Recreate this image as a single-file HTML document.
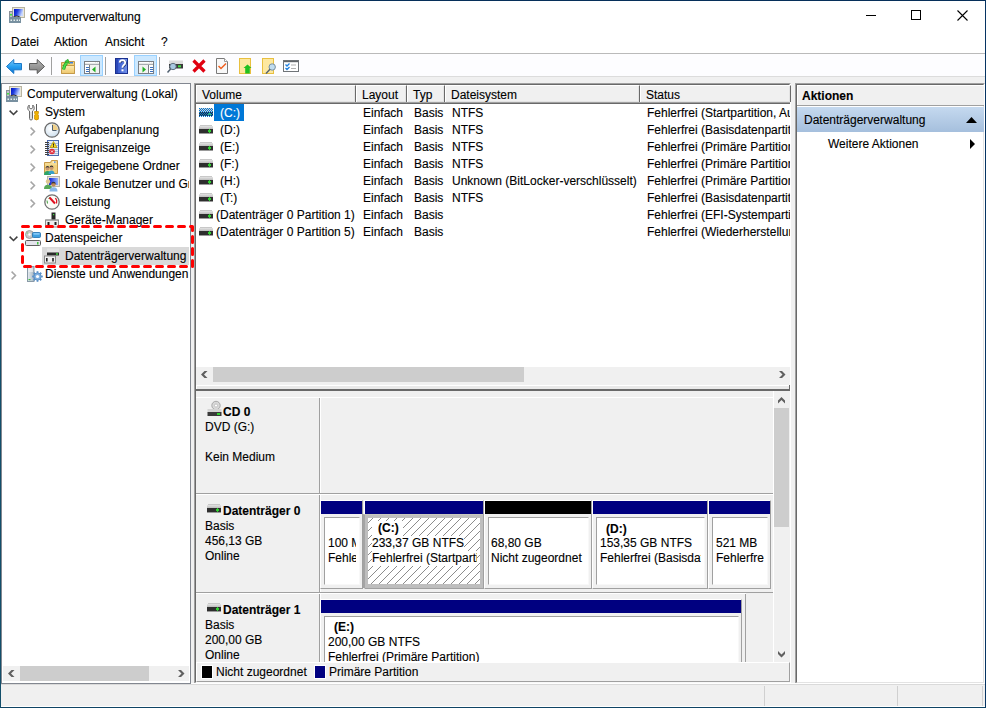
<!DOCTYPE html><html><head><meta charset="utf-8"><style>
*{margin:0;padding:0;box-sizing:border-box}
body{width:986px;height:708px;position:relative;overflow:hidden;background:#f0f0f0;font-family:"Liberation Sans",sans-serif;font-size:12px;color:#000}
.t{position:absolute;white-space:nowrap;line-height:14px;height:14px;-webkit-text-stroke:0.12px currentColor}
.b{position:absolute}
.bold{font-weight:bold}
svg{position:absolute;overflow:visible}
.clip{position:absolute;overflow:hidden}
</style></head><body>
<div class="b" style="left:0px;top:0px;width:986px;height:53px;background:#fff"></div>
<div class="b" style="left:0px;top:53px;width:986px;height:1px;background:#bababa"></div>
<div class="b" style="left:0px;top:54px;width:986px;height:22px;background:#fdfdff"></div>
<div class="b" style="left:0px;top:76px;width:986px;height:1px;background:#dcdcdc"></div>
<svg style="left:9px;top:7px" width="16" height="16" viewBox="0 0 16 16">
<defs><linearGradient id="scr9_7" x1="0" y1="0" x2="1" y2="0.3"><stop offset="0" stop-color="#0010c0"/><stop offset="0.45" stop-color="#2040e0"/><stop offset="1" stop-color="#c8d8ff"/></linearGradient></defs>
<rect x="3.5" y="0.5" width="12" height="10" fill="#e8e6da" stroke="#b8b4a0"/>
<rect x="5" y="2" width="9" height="7" fill="url(#scr9_7)"/>
<rect x="0.5" y="4.5" width="3" height="8" fill="#c0c4c8" stroke="#8a9098"/>
<rect x="1" y="7" width="2" height="1.5" fill="#40e040"/>
<path d="M4 10.5 Q8 7.5 11 10.5" fill="none" stroke="#202020" stroke-width="1.2"/>
<rect x="0" y="10" width="12" height="6" rx="0.5" fill="#7890a0"/>
<rect x="1.5" y="12.5" width="1.5" height="1.5" fill="#e8f0f0"/><rect x="4.5" y="12.5" width="1.5" height="1.5" fill="#e8f0f0"/><rect x="7.5" y="12.5" width="1.5" height="1.5" fill="#e8f0f0"/><rect x="10" y="12.5" width="1" height="1.5" fill="#e8f0f0"/>
</svg>
<div class="t " style="left:30px;top:10px;">Computerverwaltung</div>
<div class="t " style="left:11px;top:35px;">Datei</div>
<div class="t " style="left:54px;top:35px;">Aktion</div>
<div class="t " style="left:105px;top:35px;">Ansicht</div>
<div class="t " style="left:161px;top:35px;">?</div>
<div class="b" style="left:866px;top:15px;width:10px;height:1px;background:#000"></div>
<div class="b" style="left:911px;top:10px;width:10px;height:10px;border:1px solid #000"></div>
<svg style="left:957px;top:10px" width="11" height="11"><path d="M0.5 0.5 L10.5 10.5 M10.5 0.5 L0.5 10.5" stroke="#000" stroke-width="1.1"/></svg>
<svg style="left:6px;top:59px" width="17" height="16" viewBox="0 0 17 16"><defs><linearGradient id="ba" x1="0" y1="0" x2="0" y2="1"><stop offset="0" stop-color="#7cc8f8"/><stop offset="0.5" stop-color="#2aa0f0"/><stop offset="1" stop-color="#0a70d0"/></linearGradient></defs>
<path d="M0.5 7.5 L7.8 0.5 L7.8 4.5 L15.5 4.5 L15.5 10.8 L7.8 10.8 L7.8 14.5 Z" fill="url(#ba)" stroke="#1a78c8" stroke-width="1"/></svg>
<svg style="left:29px;top:59px" width="17" height="16" viewBox="0 0 17 16"><defs><linearGradient id="fa" x1="0" y1="0" x2="0" y2="1"><stop offset="0" stop-color="#b8b8b8"/><stop offset="1" stop-color="#7a7a7a"/></linearGradient></defs>
<path d="M15.5 7.5 L8.2 0.5 L8.2 4.5 L0.5 4.5 L0.5 10.8 L8.2 10.8 L8.2 14.5 Z" fill="url(#fa)" stroke="#5a5a5a" stroke-width="1"/></svg>
<div class="b" style="left:51px;top:57px;width:1px;height:18px;background:#a0a0a0"></div>
<svg style="left:61px;top:59px" width="15" height="15" viewBox="0 0 15 15"><defs><linearGradient id="fu" x1="0" y1="0" x2="0" y2="1"><stop offset="0" stop-color="#fdebb4"/><stop offset="1" stop-color="#eec76c"/></linearGradient></defs>
<path d="M0.5 3.5 L5 3.5 L6 2.5 L13.5 2.5 L13.5 14.5 L0.5 14.5 Z" fill="#f4d27c" stroke="#c49a4a"/>
<rect x="9" y="3" width="3" height="1.5" fill="#3a80e0"/>
<path d="M0.5 6.5 L13.5 6.5 L13.5 14.5 L0.5 14.5 Z" fill="url(#fu)" stroke="#c49a4a"/>
<path d="M2.6 10.5 Q3 6 6 3.8" fill="none" stroke="#22a022" stroke-width="3"/>
<path d="M2.6 10.5 Q3 6 6 3.8" fill="none" stroke="#4ade4a" stroke-width="1.6"/>
<path d="M3.8 2.5 L7 0.3 L8.5 4.5 Z" fill="#3ccc3c" stroke="#22a022" stroke-width="0.7"/></svg>
<div class="b" style="left:80px;top:55px;width:23px;height:21px;background:#cce8ff;border:1px solid #99d1ff"></div>
<svg style="left:84px;top:61px" width="16" height="13" viewBox="0 0 16 13"><g shape-rendering="crispEdges"><rect x="0" y="0" width="16" height="13" fill="#7a7e84"/>
<rect x="1" y="1" width="14" height="2" fill="#e8e8e8"/><rect x="1" y="1" width="10" height="1" fill="#fff"/>
<rect x="12" y="1" width="1" height="1" fill="#fff"/><rect x="14" y="1" width="1" height="1" fill="#fff"/>
<rect x="1" y="3" width="14" height="1" fill="#a8acb0"/>
<rect x="1" y="4" width="4" height="8" fill="#fff"/><rect x="2" y="6" width="3" height="1" fill="#3a70c0"/><rect x="2" y="8" width="3" height="1" fill="#3a70c0"/><rect x="2" y="10" width="3" height="1" fill="#3a70c0"/><rect x="5" y="4" width="1" height="8" fill="#7a7e84"/><rect x="6" y="4" width="9" height="8" fill="#f2f2f2"/><path d="M8 8.5 L11.5 5.5 L11.5 11.5 Z" fill="#22b022" shape-rendering="auto"/></g></svg>
<div class="b" style="left:105px;top:57px;width:1px;height:18px;background:#a0a0a0"></div>
<svg style="left:115px;top:58px" width="13" height="16" viewBox="0 0 13 16"><defs><linearGradient id="hb" x1="0" y1="0" x2="1" y2="0"><stop offset="0" stop-color="#3a5cd0"/><stop offset="1" stop-color="#7090e8"/></linearGradient></defs>
<g shape-rendering="crispEdges"><rect x="0" y="0" width="13" height="16" fill="#1a3090"/><rect x="1" y="1" width="2" height="14" fill="#2c48b8"/><rect x="3" y="1" width="9" height="14" fill="url(#hb)"/></g>
<path d="M4.6 4.6 Q5 2.2 7.4 2.2 Q10.2 2.3 10.2 4.8 Q10.2 6.4 8.4 7.4 Q7.5 8 7.5 9.8" fill="none" stroke="#203070" stroke-width="1.9" transform="translate(0.6,0.5)"/>
<path d="M4.6 4.6 Q5 2.2 7.4 2.2 Q10.2 2.3 10.2 4.8 Q10.2 6.4 8.4 7.4 Q7.5 8 7.5 9.8" fill="none" stroke="#fff" stroke-width="1.8"/>
<rect x="6.5" y="11.3" width="2" height="2" fill="#fff"/></svg>
<div class="b" style="left:134px;top:55px;width:23px;height:21px;background:#cce8ff;border:1px solid #99d1ff"></div>
<svg style="left:138px;top:61px" width="16" height="13" viewBox="0 0 16 13"><g shape-rendering="crispEdges"><rect x="0" y="0" width="16" height="13" fill="#7a7e84"/>
<rect x="1" y="1" width="14" height="2" fill="#e8e8e8"/><rect x="1" y="1" width="10" height="1" fill="#fff"/>
<rect x="12" y="1" width="1" height="1" fill="#fff"/><rect x="14" y="1" width="1" height="1" fill="#fff"/>
<rect x="1" y="3" width="14" height="1" fill="#a8acb0"/>
<rect x="11" y="4" width="4" height="8" fill="#fff"/><rect x="12" y="6" width="3" height="1" fill="#3a70c0"/><rect x="12" y="8" width="3" height="1" fill="#3a70c0"/><rect x="12" y="10" width="3" height="1" fill="#3a70c0"/><rect x="10" y="4" width="1" height="8" fill="#7a7e84"/><rect x="1" y="4" width="9" height="8" fill="#f2f2f2"/><path d="M4.5 5.5 L8 8.5 L4.5 11.5 Z" fill="#22b022" shape-rendering="auto"/></g></svg>
<div class="b" style="left:159px;top:57px;width:1px;height:18px;background:#a0a0a0"></div>
<svg style="left:167px;top:60px" width="17" height="14" viewBox="0 0 17 14"><rect x="2" y="0.5" width="14" height="4" fill="#dcdcdc"/><rect x="2" y="4" width="14" height="4.5" fill="#3a3a3a"/><rect x="11" y="5.3" width="3" height="2" fill="#40e040"/>
<circle cx="6" cy="6.5" r="3.2" fill="#a8c8e0" stroke="#607080" stroke-width="1"/>
<path d="M3.8 8.8 L0.5 12.5" stroke="#506070" stroke-width="1.5"/></svg>
<svg style="left:192px;top:59px" width="14" height="14" viewBox="0 0 14 14"><path d="M1.5 1.5 L12.5 12.5 M12.5 1.5 L1.5 12.5" stroke="#e00010" stroke-width="3.2"/></svg>
<svg style="left:216px;top:58px" width="12" height="16" viewBox="0 0 12 16"><path d="M0.5 0.5 L8.5 0.5 L11.5 3.5 L11.5 15.5 L0.5 15.5 Z" fill="#f8f8f8" stroke="#7a7a7a"/>
<path d="M8.5 0.5 L8.5 3.5 L11.5 3.5" fill="#fff" stroke="#9a9a9a"/>
<path d="M2.5 8 L5 10.5 L10 5.5" fill="none" stroke="#f06020" stroke-width="1.5"/></svg>
<svg style="left:239px;top:58px" width="14" height="16" viewBox="0 0 14 16"><rect x="0.5" y="0.5" width="11" height="15" fill="#fde8a0" stroke="#e8c040"/>
<path d="M6.5 6.5 L10.5 10 L8.8 10 L8.8 15.5 L4.2 15.5 L4.2 10 L2.5 10 Z" fill="#20c020" transform="translate(2,0)"/></svg>
<svg style="left:262px;top:58px" width="14" height="16" viewBox="0 0 14 16"><rect x="0.5" y="0.5" width="11" height="15" fill="#fde8a0" stroke="#e8c040"/>
<circle cx="10.2" cy="9" r="3.2" fill="#c0dcf0" stroke="#7890a0" stroke-width="1"/>
<path d="M8 11.3 L4 15.5" stroke="#506070" stroke-width="1.4"/></svg>
<svg style="left:283px;top:60px" width="16" height="12" viewBox="0 0 16 12"><rect x="0.5" y="0.5" width="15" height="11" fill="#fff" stroke="#707478"/>
<rect x="1" y="1" width="14" height="1.2" fill="#606468"/>
<path d="M2.5 4.5 L4 6 L6.5 3.5 M2.5 8 L4 9.5 L6.5 7" fill="none" stroke="#2080e0" stroke-width="1.3"/>
<rect x="8" y="4.5" width="5" height="1" fill="#b0b0b0"/><rect x="8" y="8" width="5" height="1" fill="#b0b0b0"/></svg>
<div class="b" style="left:1px;top:83px;width:190px;height:601px;background:#fff;border:1px solid #828790"></div>
<div class="b" style="left:42px;top:247px;width:147px;height:18px;background:#d9d9d9"></div>
<div class="clip" style="left:2px;top:84px;width:187px;height:580px">
<div class="t" style="left:25px;top:3px">Computerverwaltung (Lokal)</div>
<div class="t" style="left:43px;top:21px">System</div>
<div class="t" style="left:63px;top:39px">Aufgabenplanung</div>
<div class="t" style="left:63px;top:57px">Ereignisanzeige</div>
<div class="t" style="left:63px;top:75px">Freigegebene Ordner</div>
<div class="t" style="left:63px;top:93px">Lokale Benutzer und Gruppen</div>
<div class="t" style="left:63px;top:111px">Leistung</div>
<div class="t" style="left:63px;top:129px">Geräte-Manager</div>
<div class="t" style="left:43px;top:147px">Datenspeicher</div>
<div class="t" style="left:63px;top:165px">Datenträgerverwaltung</div>
<div class="t" style="left:43px;top:183px">Dienste und Anwendungen</div>
</div>
<svg style="left:9px;top:110px" width="10" height="6"><path d="M0.6 0.6 L4.5 4.5 L8.4 0.6" fill="none" stroke="#404040" stroke-width="1.5"/></svg>
<svg style="left:9px;top:236px" width="10" height="6"><path d="M0.6 0.6 L4.5 4.5 L8.4 0.6" fill="none" stroke="#404040" stroke-width="1.5"/></svg>
<svg style="left:30px;top:127px" width="6" height="10"><path d="M0.6 0.6 L4.5 4.5 L0.6 8.4" fill="none" stroke="#a6a6a6" stroke-width="1.5"/></svg>
<svg style="left:30px;top:145px" width="6" height="10"><path d="M0.6 0.6 L4.5 4.5 L0.6 8.4" fill="none" stroke="#a6a6a6" stroke-width="1.5"/></svg>
<svg style="left:30px;top:163px" width="6" height="10"><path d="M0.6 0.6 L4.5 4.5 L0.6 8.4" fill="none" stroke="#a6a6a6" stroke-width="1.5"/></svg>
<svg style="left:30px;top:181px" width="6" height="10"><path d="M0.6 0.6 L4.5 4.5 L0.6 8.4" fill="none" stroke="#a6a6a6" stroke-width="1.5"/></svg>
<svg style="left:30px;top:199px" width="6" height="10"><path d="M0.6 0.6 L4.5 4.5 L0.6 8.4" fill="none" stroke="#a6a6a6" stroke-width="1.5"/></svg>
<svg style="left:11px;top:271px" width="6" height="10"><path d="M0.6 0.6 L4.5 4.5 L0.6 8.4" fill="none" stroke="#a6a6a6" stroke-width="1.5"/></svg>
<svg style="left:6px;top:86px" width="16" height="16" viewBox="0 0 16 16">
<defs><linearGradient id="scr6_86" x1="0" y1="0" x2="1" y2="0.3"><stop offset="0" stop-color="#0010c0"/><stop offset="0.45" stop-color="#2040e0"/><stop offset="1" stop-color="#c8d8ff"/></linearGradient></defs>
<rect x="3.5" y="0.5" width="12" height="10" fill="#e8e6da" stroke="#b8b4a0"/>
<rect x="5" y="2" width="9" height="7" fill="url(#scr6_86)"/>
<rect x="0.5" y="4.5" width="3" height="8" fill="#c0c4c8" stroke="#8a9098"/>
<rect x="1" y="7" width="2" height="1.5" fill="#40e040"/>
<path d="M4 10.5 Q8 7.5 11 10.5" fill="none" stroke="#202020" stroke-width="1.2"/>
<rect x="0" y="10" width="12" height="6" rx="0.5" fill="#7890a0"/>
<rect x="1.5" y="12.5" width="1.5" height="1.5" fill="#e8f0f0"/><rect x="4.5" y="12.5" width="1.5" height="1.5" fill="#e8f0f0"/><rect x="7.5" y="12.5" width="1.5" height="1.5" fill="#e8f0f0"/><rect x="10" y="12.5" width="1" height="1.5" fill="#e8f0f0"/>
</svg>
<svg style="left:27px;top:104px" width="12" height="16" viewBox="0 0 12 16"><path d="M2.2 1 Q0.3 2.5 0.8 5 Q1.3 6.5 2.5 7 L2.5 14.5 Q2.5 16 4 16 Q5.5 16 5.5 14.5 L5.5 7 Q6.8 6.4 7.2 5 Q7.6 2.5 5.8 1 L5.8 3.8 L4 5 L2.2 3.8 Z" fill="#f4f4f4" stroke="#6a6a6a" stroke-width="1"/>
<rect x="3.5" y="8" width="1" height="7" fill="#c8c8c8"/>
<rect x="9" y="0" width="1" height="7.5" fill="#5a5a5a"/>
<path d="M7.6 7.5 L11.4 7.5 L11.4 9.3 L10.6 10.2 L11.4 11 L11.4 15.2 Q9.5 16.6 7.6 15.2 L7.6 11 L8.4 10.2 L7.6 9.3 Z" fill="#f2b400" stroke="#c88a00" stroke-width="0.8"/></svg>
<svg style="left:44px;top:122px" width="16" height="16" viewBox="0 0 16 16"><defs><radialGradient id="cl" cx="0.4" cy="0.4" r="0.7"><stop offset="0" stop-color="#ffffff"/><stop offset="1" stop-color="#c8dcec"/></radialGradient></defs>
<circle cx="8" cy="8" r="7.2" fill="url(#cl)" stroke="#6a6a6a" stroke-width="1.3"/>
<path d="M8 8 L8 2 A6 6 0 0 1 14 8 Z" fill="#f0d088"/>
<path d="M8.5 3 L8.5 8.5 L12.5 8.5" fill="none" stroke="#506070" stroke-width="1"/></svg>
<svg style="left:45px;top:140px" width="15" height="16" viewBox="0 0 15 16"><rect x="2.5" y="0.5" width="11" height="15" fill="#e4ecf8" stroke="#4a6ab0"/>
<g shape-rendering="crispEdges"><rect x="3" y="3" width="10" height="1" fill="#a8bcdc"/><rect x="3" y="5" width="10" height="1" fill="#a8bcdc"/><rect x="3" y="7" width="10" height="1" fill="#a8bcdc"/><rect x="3" y="9" width="10" height="1" fill="#a8bcdc"/><rect x="3" y="11" width="10" height="1" fill="#a8bcdc"/><rect x="3" y="13" width="10" height="1" fill="#a8bcdc"/></g>
<path d="M0 2.5 H4 M0 4.5 H4 M0 6.5 H4 M0 8.5 H4 M0 10.5 H4 M0 12.5 H4 M0 14.5 H4" stroke="#404040" stroke-width="1"/>
<path d="M8.5 1.5 L12 7.5 L5 7.5 Z" fill="#f8d820" stroke="#b09000" stroke-width="0.7"/><rect x="8" y="3.5" width="1" height="2.2" fill="#202020"/><rect x="8" y="6.2" width="1" height="0.8" fill="#202020"/>
<circle cx="7" cy="11.5" r="2.8" fill="#e02838"/><path d="M6 10.5 L8 12.5 M8 10.5 L6 12.5" stroke="#fff" stroke-width="0.9"/></svg>
<svg style="left:44px;top:160px" width="14" height="16" viewBox="0 0 14 16"><path d="M0.5 2.5 L6.5 2.5 L7.5 0.5 L13.5 0.5 L13.5 13.5 L0.5 13.5 Z" fill="#f2d27e" stroke="#c89a48"/>
<rect x="8.5" y="1.5" width="3" height="1.2" fill="#fff"/><rect x="10" y="1.5" width="1.5" height="1.2" fill="#3a80e0"/>
<rect x="1" y="3.5" width="12" height="1" fill="#f8e4a8"/>
<circle cx="3.5" cy="8.5" r="2" fill="#c89870"/><path d="M1.5 8 Q1.8 6 3.5 6 Q5.3 6 5.5 8 Q4.5 7 3.5 7.2 Q2.5 7 1.5 8Z" fill="#303030"/>
<path d="M0 15 Q0 11 3.5 11 Q7 11 7 15 Z" fill="#2ea468"/>
<circle cx="7.5" cy="8" r="2" fill="#c89870"/><path d="M5.5 7.5 Q5.8 5.5 7.5 5.5 Q9.3 5.5 9.5 7.5 Q8.5 6.5 7.5 6.7 Q6.5 6.5 5.5 7.5Z" fill="#303030"/>
<path d="M4.5 14 Q4.5 10.5 7.5 10.5 Q10.5 10.5 10.5 14 Z" fill="#38a0c8"/></svg>
<svg style="left:44px;top:176px" width="16" height="16" viewBox="0 0 16 16"><rect x="3.5" y="0.5" width="12" height="10" fill="#e4e2d8" stroke="#b8b4a8"/>
<defs><linearGradient id="lus" x1="0" y1="0" x2="1" y2="0"><stop offset="0" stop-color="#1020d0"/><stop offset="1" stop-color="#90b0ff"/></linearGradient></defs>
<rect x="5" y="2" width="9" height="7" fill="url(#lus)"/>
<circle cx="4" cy="5.5" r="2.2" fill="#e0c890"/><path d="M0 13 Q0 8.8 4 8.8 Q8 8.8 8 13 Z" fill="#58a858"/>
<circle cx="9.5" cy="8.3" r="2.2" fill="#c08858"/><path d="M7.3 8 Q7.5 5.8 9.5 5.8 Q11.5 5.8 11.7 8 Q10.5 7 9.5 7.2 Q8.5 7 7.3 8Z" fill="#383838"/>
<path d="M5.5 15.5 Q5.5 11.3 9.5 11.3 Q13.5 11.3 13.5 15.5 Z" fill="#88b8e8"/></svg>
<svg style="left:44px;top:194px" width="16" height="16" viewBox="0 0 16 16"><circle cx="8" cy="8" r="7.2" fill="#fbfbf6" stroke="#707070" stroke-width="1.3"/>
<path d="M3.5 9.5 L3 6.5 M4.5 4.5 L6 3.5" stroke="#40a040" stroke-width="1"/>
<path d="M11.5 4 L12.7 6.5 L12.5 9.5" stroke="#e01020" stroke-width="1.2" fill="none"/>
<path d="M5.5 3.5 L11 9.5" stroke="#e01020" stroke-width="2"/></svg>
<svg style="left:45px;top:212px" width="14" height="16" viewBox="0 0 14 16"><rect x="6.5" y="0.5" width="4" height="8" fill="#2a2a2a"/><rect x="8" y="2" width="1.2" height="1.2" fill="#40e040"/>
<rect x="0.5" y="8" width="13" height="7" fill="#ececec" stroke="#8a8a8a"/><rect x="0.5" y="7.5" width="13" height="1" fill="#9a9a9a"/>
<rect x="2.5" y="10" width="2" height="3" fill="#202020"/><rect x="9.5" y="10" width="2" height="3" fill="#202020"/></svg>
<svg style="left:25px;top:230px" width="16" height="16" viewBox="0 0 16 16"><circle cx="4.5" cy="4.5" r="4" fill="#c8c8c8" stroke="#909090" stroke-width="0.8"/><circle cx="4.5" cy="4.5" r="1.2" fill="#fff"/><circle cx="2.5" cy="3" r="0.8" fill="#80d080"/>
<rect x="7.5" y="2.5" width="8" height="5" rx="1" fill="#40a0e0" stroke="#2070b0" stroke-width="0.8"/><rect x="8.5" y="3.3" width="6" height="1.2" fill="#a0d8ff"/>
<rect x="0.5" y="10.5" width="15" height="5" rx="1" fill="#e4e4ec" stroke="#606060"/><rect x="12" y="12" width="1.5" height="2.5" fill="#40c040"/></svg>
<svg style="left:44px;top:248px" width="16" height="16" viewBox="0 0 16 16"><rect x="3" y="0.5" width="12" height="4" fill="#e4e4e4"/><rect x="3" y="4.5" width="12" height="3" fill="#2a2a2a"/><rect x="12" y="5.3" width="2" height="1.4" fill="#40e040"/>
<rect x="0.5" y="8" width="11" height="7" fill="#f0f0f0" stroke="#8a8a8a"/><rect x="2" y="10" width="1.6" height="3.5" fill="#202020"/><rect x="8.2" y="10" width="1.6" height="3.5" fill="#202020"/></svg>
<svg style="left:27px;top:266px" width="16" height="16" viewBox="0 0 16 16"><defs><linearGradient id="sv" x1="0" y1="0" x2="1" y2="0"><stop offset="0" stop-color="#e8eef2"/><stop offset="1" stop-color="#a8b8c4"/></linearGradient></defs>
<rect x="0.5" y="0.5" width="6.5" height="15" fill="url(#sv)" stroke="#8a9aa8"/><rect x="1.5" y="2.5" width="4.5" height="1" fill="#fff"/><rect x="1.5" y="4.5" width="4.5" height="1" fill="#fff"/>
<rect x="9.6" y="5.2" width="1.8" height="2.2" fill="#5a90c8" transform="rotate(0 10.5 10.5)"/><rect x="9.6" y="5.2" width="1.8" height="2.2" fill="#5a90c8" transform="rotate(45 10.5 10.5)"/><rect x="9.6" y="5.2" width="1.8" height="2.2" fill="#5a90c8" transform="rotate(90 10.5 10.5)"/><rect x="9.6" y="5.2" width="1.8" height="2.2" fill="#5a90c8" transform="rotate(135 10.5 10.5)"/><rect x="9.6" y="5.2" width="1.8" height="2.2" fill="#5a90c8" transform="rotate(180 10.5 10.5)"/><rect x="9.6" y="5.2" width="1.8" height="2.2" fill="#5a90c8" transform="rotate(225 10.5 10.5)"/><rect x="9.6" y="5.2" width="1.8" height="2.2" fill="#5a90c8" transform="rotate(270 10.5 10.5)"/><rect x="9.6" y="5.2" width="1.8" height="2.2" fill="#5a90c8" transform="rotate(315 10.5 10.5)"/><circle cx="10.5" cy="10.5" r="3.6" fill="#7fb0e0" stroke="#5a90c8" stroke-width="1"/><circle cx="10.5" cy="10.5" r="1.6" fill="#fff"/><rect x="1.5" y="13" width="2" height="1.2" fill="#40c040"/></svg>
<div class="b" style="left:3px;top:666px;width:186px;height:15px;background:#f0f0f0"></div>
<div class="b" style="left:20px;top:666px;width:129px;height:15px;background:#cdcdcd"></div>
<svg style="left:0;top:0" width="986" height="708"><path d="M8 673.5 L11.5 670.0 L14.5 670.0 L11 673.5 L14.5 677.0 L11.5 677.0 Z" fill="#606060"/></svg>
<svg style="left:0;top:0" width="986" height="708"><path d="M184.5 673.5 L181.0 670.0 L178.0 670.0 L181.5 673.5 L178.0 677.0 L181.0 677.0 Z" fill="#606060"/></svg>
<svg style="left:0px;top:0px" width="986" height="708"><path d="M22.5 226.5 H192.5 V266.5 H22.5 Z" fill="none" stroke="#f00" stroke-width="3" stroke-dasharray="6 6" stroke-linecap="round" stroke-linejoin="round"/></svg>
<div class="b" style="left:194px;top:83px;width:597px;height:601px;background:#f0f0f0;border-top:1px solid #a0a0a0;border-left:1px solid #a0a0a0;border-right:1px solid #fff;border-bottom:1px solid #fff"></div>
<div class="b" style="left:195px;top:84px;width:595px;height:599px;border-top:1px solid #696969;border-left:1px solid #696969;border-right:1px solid #f4f4f4;border-bottom:1px solid #f8f8f8"></div>
<div class="b" style="left:196px;top:85px;width:594px;height:282px;background:#fff"></div>
<div class="b" style="left:196px;top:85px;width:160px;height:17px;background:#f0f0f0;border-left:1px solid #fff;border-top:1px solid #fff;border-right:1px solid #696969;box-shadow:inset -1px -1px 0 #e3e3e3"></div>
<div class="t " style="left:202px;top:88px;">Volume</div>
<div class="b" style="left:356px;top:85px;width:51px;height:17px;background:#f0f0f0;border-left:1px solid #fff;border-top:1px solid #fff;border-right:1px solid #696969;box-shadow:inset -1px -1px 0 #e3e3e3"></div>
<div class="t " style="left:362px;top:88px;">Layout</div>
<div class="b" style="left:407px;top:85px;width:38px;height:17px;background:#f0f0f0;border-left:1px solid #fff;border-top:1px solid #fff;border-right:1px solid #696969;box-shadow:inset -1px -1px 0 #e3e3e3"></div>
<div class="t " style="left:413px;top:88px;">Typ</div>
<div class="b" style="left:445px;top:85px;width:195px;height:17px;background:#f0f0f0;border-left:1px solid #fff;border-top:1px solid #fff;border-right:1px solid #696969;box-shadow:inset -1px -1px 0 #e3e3e3"></div>
<div class="t " style="left:451px;top:88px;">Dateisystem</div>
<div class="b" style="left:640px;top:85px;width:151px;height:17px;background:#f0f0f0;border-left:1px solid #fff;border-top:1px solid #fff;border-right:1px solid #696969;box-shadow:inset -1px -1px 0 #e3e3e3"></div>
<div class="t " style="left:646px;top:88px;">Status</div>
<div class="b" style="left:196px;top:102px;width:594px;height:1px;background:#a0a0a0"></div>
<div class="b" style="left:196px;top:103px;width:594px;height:1px;background:#696969"></div>
<div class="b" style="left:214px;top:104px;width:30px;height:17px;background:#0078d7"></div>
<div class="t " style="left:220px;top:106px;color:#fff">(C:)</div>
<div class="t " style="left:363px;top:106px;">Einfach</div>
<div class="t " style="left:414px;top:106px;">Basis</div>
<div class="t " style="left:452px;top:106px;">NTFS</div>
<div class="t" style="left:647px;top:106px;width:143px;overflow:hidden">Fehlerfrei (Startpartition, Auslagerungsdatei, Absturzabbild, Primäre Partition)</div>
<svg style="left:199px;top:108px" width="14" height="9" viewBox="0 0 14 9"><defs><pattern id="dith" width="2" height="2" patternUnits="userSpaceOnUse"><rect width="1" height="1" fill="#0078d7"/><rect x="1" y="1" width="1" height="1" fill="#0078d7"/></pattern></defs>
<rect x="0" y="0" width="14" height="4" fill="#d0d0d0"/><rect x="0" y="4" width="14" height="4" fill="#303030"/><rect x="9" y="5" width="3" height="2" fill="#40e040"/>
<rect x="0" y="0" width="14" height="9" fill="url(#dith)"/></svg>
<div class="t " style="left:220px;top:123px;color:#000">(D:)</div>
<div class="t " style="left:363px;top:123px;">Einfach</div>
<div class="t " style="left:414px;top:123px;">Basis</div>
<div class="t " style="left:452px;top:123px;">NTFS</div>
<div class="t" style="left:647px;top:123px;width:143px;overflow:hidden">Fehlerfrei (Basisdatenpartition)</div>
<svg style="left:199px;top:125px" width="14" height="9" viewBox="0 0 14 9"><defs><linearGradient id="dg" x1="0" y1="0" x2="0" y2="1"><stop offset="0" stop-color="#e4e4e4"/><stop offset="1" stop-color="#bcbcbc"/></linearGradient></defs>
<g shape-rendering="crispEdges"><rect x="1" y="0" width="12" height="1" fill="#c8c8c8"/><rect x="0" y="1" width="14" height="3" fill="url(#dg)"/><rect x="0" y="4" width="14" height="4" fill="#2e2e2e"/><rect x="0" y="8" width="14" height="1" fill="#9a9a9a"/><rect x="9" y="5" width="3" height="2" fill="#30d030"/><rect x="10" y="4" width="1" height="4" fill="#30d030"/></g></svg>
<div class="t " style="left:220px;top:140px;color:#000">(E:)</div>
<div class="t " style="left:363px;top:140px;">Einfach</div>
<div class="t " style="left:414px;top:140px;">Basis</div>
<div class="t " style="left:452px;top:140px;">NTFS</div>
<div class="t" style="left:647px;top:140px;width:143px;overflow:hidden">Fehlerfrei (Primäre Partition)</div>
<svg style="left:199px;top:142px" width="14" height="9" viewBox="0 0 14 9"><defs><linearGradient id="dg" x1="0" y1="0" x2="0" y2="1"><stop offset="0" stop-color="#e4e4e4"/><stop offset="1" stop-color="#bcbcbc"/></linearGradient></defs>
<g shape-rendering="crispEdges"><rect x="1" y="0" width="12" height="1" fill="#c8c8c8"/><rect x="0" y="1" width="14" height="3" fill="url(#dg)"/><rect x="0" y="4" width="14" height="4" fill="#2e2e2e"/><rect x="0" y="8" width="14" height="1" fill="#9a9a9a"/><rect x="9" y="5" width="3" height="2" fill="#30d030"/><rect x="10" y="4" width="1" height="4" fill="#30d030"/></g></svg>
<div class="t " style="left:220px;top:157px;color:#000">(F:)</div>
<div class="t " style="left:363px;top:157px;">Einfach</div>
<div class="t " style="left:414px;top:157px;">Basis</div>
<div class="t " style="left:452px;top:157px;">NTFS</div>
<div class="t" style="left:647px;top:157px;width:143px;overflow:hidden">Fehlerfrei (Primäre Partition)</div>
<svg style="left:199px;top:159px" width="14" height="9" viewBox="0 0 14 9"><defs><linearGradient id="dg" x1="0" y1="0" x2="0" y2="1"><stop offset="0" stop-color="#e4e4e4"/><stop offset="1" stop-color="#bcbcbc"/></linearGradient></defs>
<g shape-rendering="crispEdges"><rect x="1" y="0" width="12" height="1" fill="#c8c8c8"/><rect x="0" y="1" width="14" height="3" fill="url(#dg)"/><rect x="0" y="4" width="14" height="4" fill="#2e2e2e"/><rect x="0" y="8" width="14" height="1" fill="#9a9a9a"/><rect x="9" y="5" width="3" height="2" fill="#30d030"/><rect x="10" y="4" width="1" height="4" fill="#30d030"/></g></svg>
<div class="t " style="left:220px;top:174px;color:#000">(H:)</div>
<div class="t " style="left:363px;top:174px;">Einfach</div>
<div class="t " style="left:414px;top:174px;">Basis</div>
<div class="t " style="left:452px;top:174px;">Unknown (BitLocker-verschlüsselt)</div>
<div class="t" style="left:647px;top:174px;width:143px;overflow:hidden">Fehlerfrei (Primäre Partition)</div>
<svg style="left:199px;top:176px" width="14" height="9" viewBox="0 0 14 9"><defs><linearGradient id="dg" x1="0" y1="0" x2="0" y2="1"><stop offset="0" stop-color="#e4e4e4"/><stop offset="1" stop-color="#bcbcbc"/></linearGradient></defs>
<g shape-rendering="crispEdges"><rect x="1" y="0" width="12" height="1" fill="#c8c8c8"/><rect x="0" y="1" width="14" height="3" fill="url(#dg)"/><rect x="0" y="4" width="14" height="4" fill="#2e2e2e"/><rect x="0" y="8" width="14" height="1" fill="#9a9a9a"/><rect x="9" y="5" width="3" height="2" fill="#30d030"/><rect x="10" y="4" width="1" height="4" fill="#30d030"/></g></svg>
<div class="t " style="left:220px;top:191px;color:#000">(T:)</div>
<div class="t " style="left:363px;top:191px;">Einfach</div>
<div class="t " style="left:414px;top:191px;">Basis</div>
<div class="t " style="left:452px;top:191px;">NTFS</div>
<div class="t" style="left:647px;top:191px;width:143px;overflow:hidden">Fehlerfrei (Basisdatenpartition)</div>
<svg style="left:199px;top:193px" width="14" height="9" viewBox="0 0 14 9"><defs><linearGradient id="dg" x1="0" y1="0" x2="0" y2="1"><stop offset="0" stop-color="#e4e4e4"/><stop offset="1" stop-color="#bcbcbc"/></linearGradient></defs>
<g shape-rendering="crispEdges"><rect x="1" y="0" width="12" height="1" fill="#c8c8c8"/><rect x="0" y="1" width="14" height="3" fill="url(#dg)"/><rect x="0" y="4" width="14" height="4" fill="#2e2e2e"/><rect x="0" y="8" width="14" height="1" fill="#9a9a9a"/><rect x="9" y="5" width="3" height="2" fill="#30d030"/><rect x="10" y="4" width="1" height="4" fill="#30d030"/></g></svg>
<div class="t " style="left:216px;top:208px;color:#000">(Datenträger 0 Partition 1)</div>
<div class="t " style="left:363px;top:208px;">Einfach</div>
<div class="t " style="left:414px;top:208px;">Basis</div>
<div class="t " style="left:452px;top:208px;"></div>
<div class="t" style="left:647px;top:208px;width:143px;overflow:hidden">Fehlerfrei (EFI-Systempartition)</div>
<svg style="left:199px;top:210px" width="14" height="9" viewBox="0 0 14 9"><defs><linearGradient id="dg" x1="0" y1="0" x2="0" y2="1"><stop offset="0" stop-color="#e4e4e4"/><stop offset="1" stop-color="#bcbcbc"/></linearGradient></defs>
<g shape-rendering="crispEdges"><rect x="1" y="0" width="12" height="1" fill="#c8c8c8"/><rect x="0" y="1" width="14" height="3" fill="url(#dg)"/><rect x="0" y="4" width="14" height="4" fill="#2e2e2e"/><rect x="0" y="8" width="14" height="1" fill="#9a9a9a"/><rect x="9" y="5" width="3" height="2" fill="#30d030"/><rect x="10" y="4" width="1" height="4" fill="#30d030"/></g></svg>
<div class="t " style="left:216px;top:225px;color:#000">(Datenträger 0 Partition 5)</div>
<div class="t " style="left:363px;top:225px;">Einfach</div>
<div class="t " style="left:414px;top:225px;">Basis</div>
<div class="t " style="left:452px;top:225px;"></div>
<div class="t" style="left:647px;top:225px;width:143px;overflow:hidden">Fehlerfrei (Wiederherstellungspartition)</div>
<svg style="left:199px;top:227px" width="14" height="9" viewBox="0 0 14 9"><defs><linearGradient id="dg" x1="0" y1="0" x2="0" y2="1"><stop offset="0" stop-color="#e4e4e4"/><stop offset="1" stop-color="#bcbcbc"/></linearGradient></defs>
<g shape-rendering="crispEdges"><rect x="1" y="0" width="12" height="1" fill="#c8c8c8"/><rect x="0" y="1" width="14" height="3" fill="url(#dg)"/><rect x="0" y="4" width="14" height="4" fill="#2e2e2e"/><rect x="0" y="8" width="14" height="1" fill="#9a9a9a"/><rect x="9" y="5" width="3" height="2" fill="#30d030"/><rect x="10" y="4" width="1" height="4" fill="#30d030"/></g></svg>
<div class="b" style="left:196px;top:367px;width:594px;height:15px;background:#f0f0f0"></div>
<div class="b" style="left:213px;top:367px;width:311px;height:15px;background:#cdcdcd"></div>
<svg style="left:0;top:0" width="986" height="708"><path d="M201 374.5 L204.5 371.0 L207.5 371.0 L204 374.5 L207.5 378.0 L204.5 378.0 Z" fill="#606060"/></svg>
<svg style="left:0;top:0" width="986" height="708"><path d="M785.5 374.5 L782.0 371.0 L779.0 371.0 L782.5 374.5 L779.0 378.0 L782.0 378.0 Z" fill="#606060"/></svg>
<div class="b" style="left:196px;top:385px;width:594px;height:1px;background:#fff"></div>
<div class="b" style="left:196px;top:386px;width:594px;height:3px;background:#e9e9e9;border-left:1px solid #fff"></div>
<div class="b" style="left:789px;top:385px;width:1px;height:4px;background:#696969"></div>
<div class="b" style="left:196px;top:389px;width:594px;height:2px;background:#696969"></div>
<div class="clip" style="left:196px;top:391px;width:578px;height:271px">
<div class="b" style="left:0px;top:6px;width:577px;height:97px;background:#f0f0f0;border-top:1px solid #fff"></div>
<div class="b" style="left:123px;top:7px;width:1px;height:96px;background:#a0a0a0"></div>
<div class="b" style="left:124px;top:7px;width:1px;height:96px;background:#fff"></div>
<div class="b" style="left:0px;top:102px;width:577px;height:1px;background:#a0a0a0"></div>
<div class="b" style="left:0px;top:103px;width:577px;height:99px;background:#f0f0f0;border-top:1px solid #fff"></div>
<div class="b" style="left:123px;top:104px;width:1px;height:98px;background:#a0a0a0"></div>
<div class="b" style="left:124px;top:104px;width:1px;height:98px;background:#fff"></div>
<div class="b" style="left:0px;top:201px;width:577px;height:1px;background:#a0a0a0"></div>
<div class="b" style="left:0px;top:202px;width:550px;height:100px;background:#f0f0f0;border-top:1px solid #fff"></div>
<div class="b" style="left:123px;top:203px;width:1px;height:99px;background:#a0a0a0"></div>
<div class="b" style="left:124px;top:203px;width:1px;height:99px;background:#fff"></div>
<div class="b" style="left:0px;top:301px;width:550px;height:1px;background:#a0a0a0"></div>
<div class="b" style="left:549px;top:203px;width:1px;height:80px;background:#a0a0a0"></div>
<div class="t bold" style="left:27px;top:14px;">CD 0</div>
<div class="t " style="left:9px;top:29px;">DVD (G:)</div>
<div class="t " style="left:9px;top:59px;">Kein Medium</div>
<div class="t bold" style="left:27px;top:113px;">Datenträger 0</div>
<div class="t " style="left:9px;top:128px;">Basis</div>
<div class="t " style="left:9px;top:143px;">456,13 GB</div>
<div class="t " style="left:9px;top:158px;">Online</div>
<div class="t bold" style="left:27px;top:212px;">Datenträger 1</div>
<div class="t " style="left:9px;top:227px;">Basis</div>
<div class="t " style="left:9px;top:242px;">200,00 GB</div>
<div class="t " style="left:9px;top:257px;">Online</div>
<div class="b" style="left:124px;top:109px;width:43px;height:89px;background:#f0f0f0;border-left:1px solid #fff;border-top:1px solid #fff;border-right:1px solid #a0a0a0;border-bottom:1px solid #a0a0a0"></div>
<div class="b" style="left:125px;top:110px;width:41px;height:13px;background:#000080"></div>
<div class="b" style="left:128px;top:126px;width:36px;height:68px;background:#fff;border-left:1px solid #a0a0a0;border-top:1px solid #a0a0a0;border-right:1px solid #f8f8f8;border-bottom:1px solid #f8f8f8"></div>
<div class="clip" style="left:129px;top:128px;width:31px;height:65px">
<div class="t" style="left:3px;top:17px;height:15px;line-height:14px;background:#fff">100 MB</div>
<div class="t" style="left:3px;top:32px;height:15px;line-height:14px;background:#fff">Fehlerfrei (EFI-Systempartition)</div>
</div>
<div class="b" style="left:168px;top:109px;width:120px;height:89px;background:#f0f0f0;border-left:1px solid #fff;border-top:1px solid #fff;border-right:1px solid #a0a0a0;border-bottom:1px solid #a0a0a0"></div>
<div class="b" style="left:169px;top:110px;width:118px;height:13px;background:#000080"></div>
<div class="b" style="left:167px;top:123px;width:120px;height:74px;background:#bebebe;border-left:2px solid #a4a4a4;border-top:1px solid #c8c8c0"></div>
<div class="b" style="left:172px;top:127px;width:112px;height:66px;background:#fff"></div>
<div class="clip" style="left:-196px;top:-391px;width:986px;height:708px;overflow:visible"><svg style="left:368px;top:518px" width="112" height="66" shape-rendering="crispEdges"><defs><pattern id="hatch" width="8" height="8" patternUnits="userSpaceOnUse"><rect x="0" y="4" width="1" height="1" fill="#8c8c8c"/><rect x="1" y="3" width="1" height="1" fill="#8c8c8c"/><rect x="2" y="2" width="1" height="1" fill="#8c8c8c"/><rect x="3" y="1" width="1" height="1" fill="#8c8c8c"/><rect x="4" y="0" width="1" height="1" fill="#8c8c8c"/><rect x="5" y="7" width="1" height="1" fill="#8c8c8c"/><rect x="6" y="6" width="1" height="1" fill="#8c8c8c"/><rect x="7" y="5" width="1" height="1" fill="#8c8c8c"/></pattern></defs><rect width="100%" height="100%" fill="url(#hatch)"/></svg></div>
<div class="clip" style="left:173px;top:128px;width:108px;height:65px">
<div class="t bold" style="left:3px;top:2px;height:15px;line-height:14px;background:#fff;padding-left:6px;padding-right:4px">(C:)</div>
<div class="t" style="left:3px;top:17px;height:15px;line-height:14px;background:#fff">233,37 GB NTFS</div>
<div class="t" style="left:3px;top:32px;height:15px;line-height:14px;background:#fff">Fehlerfrei (Startpartition, Auslagerungsdatei)</div>
</div>
<div class="b" style="left:288px;top:109px;width:108px;height:89px;background:#f0f0f0;border-left:1px solid #fff;border-top:1px solid #fff;border-right:1px solid #a0a0a0;border-bottom:1px solid #a0a0a0"></div>
<div class="b" style="left:289px;top:110px;width:106px;height:13px;background:#000000"></div>
<div class="b" style="left:292px;top:126px;width:101px;height:68px;background:#fff;border-left:1px solid #a0a0a0;border-top:1px solid #a0a0a0;border-right:1px solid #f8f8f8;border-bottom:1px solid #f8f8f8"></div>
<div class="clip" style="left:293px;top:128px;width:96px;height:65px">
<div class="t" style="left:2px;top:17px;height:15px;line-height:14px;background:#fff">68,80 GB</div>
<div class="t" style="left:2px;top:32px;height:15px;line-height:14px;background:#fff">Nicht zugeordnet</div>
</div>
<div class="b" style="left:396px;top:109px;width:116px;height:89px;background:#f0f0f0;border-left:1px solid #fff;border-top:1px solid #fff;border-right:1px solid #a0a0a0;border-bottom:1px solid #a0a0a0"></div>
<div class="b" style="left:397px;top:110px;width:114px;height:13px;background:#000080"></div>
<div class="b" style="left:400px;top:126px;width:109px;height:68px;background:#fff;border-left:1px solid #a0a0a0;border-top:1px solid #a0a0a0;border-right:1px solid #f8f8f8;border-bottom:1px solid #f8f8f8"></div>
<div class="clip" style="left:401px;top:128px;width:104px;height:65px">
<div class="t bold" style="left:3px;top:3px;height:15px;line-height:14px;background:#fff;padding-left:6px;padding-right:4px">(D:)</div>
<div class="t" style="left:3px;top:17px;height:15px;line-height:14px;background:#fff">153,35 GB NTFS</div>
<div class="t" style="left:3px;top:32px;height:15px;line-height:14px;background:#fff">Fehlerfrei (Basisdatenpartition)</div>
</div>
<div class="b" style="left:512px;top:109px;width:63px;height:89px;background:#f0f0f0;border-left:1px solid #fff;border-top:1px solid #fff;border-right:1px solid #a0a0a0;border-bottom:1px solid #a0a0a0"></div>
<div class="b" style="left:513px;top:110px;width:61px;height:13px;background:#000080"></div>
<div class="b" style="left:516px;top:126px;width:56px;height:68px;background:#fff;border-left:1px solid #a0a0a0;border-top:1px solid #a0a0a0;border-right:1px solid #f8f8f8;border-bottom:1px solid #f8f8f8"></div>
<div class="clip" style="left:517px;top:128px;width:51px;height:65px">
<div class="t" style="left:3px;top:17px;height:15px;line-height:14px;background:#fff">521 MB</div>
<div class="t" style="left:3px;top:32px;height:15px;line-height:14px;background:#fff">Fehlerfrei (Wiederherstellungspartition)</div>
</div>
<div class="b" style="left:124px;top:208px;width:422px;height:102px;background:#f0f0f0;border-left:1px solid #fff;border-top:1px solid #fff;border-right:1px solid #a0a0a0;border-bottom:1px solid #a0a0a0"></div>
<div class="b" style="left:125px;top:209px;width:420px;height:13px;background:#000080"></div>
<div class="b" style="left:128px;top:225px;width:415px;height:81px;background:#fff;border-left:1px solid #a0a0a0;border-top:1px solid #a0a0a0;border-right:1px solid #f8f8f8;border-bottom:1px solid #f8f8f8"></div>
<div class="clip" style="left:129px;top:227px;width:410px;height:78px">
<div class="t bold" style="left:3px;top:2px;height:15px;line-height:14px;background:#fff;padding-left:6px;padding-right:4px">(E:)</div>
<div class="t" style="left:3px;top:17px;height:15px;line-height:14px;background:#fff">200,00 GB NTFS</div>
<div class="t" style="left:3px;top:32px;height:15px;line-height:14px;background:#fff">Fehlerfrei (Primäre Partition)</div>
</div>
<div class="clip" style="left:-196px;top:-391px;width:986px;height:708px;overflow:visible"><svg style="left:207px;top:401px" width="15" height="15" viewBox="0 0 15 15"><circle cx="9" cy="4.5" r="4.2" fill="#d8d8d8" stroke="#9a9a9a" stroke-width="0.8"/><circle cx="9" cy="4.5" r="1.5" fill="#fff" stroke="#a0a0a0" stroke-width="0.5"/>
<rect x="0.5" y="8" width="14" height="3.5" fill="#d4d4d4"/><rect x="0.5" y="11" width="14" height="4" fill="#3a3a3a"/><rect x="10" y="12" width="3" height="2" fill="#30d030"/></svg></div>
<div class="clip" style="left:-196px;top:-391px;width:986px;height:708px;overflow:visible"><svg style="left:207px;top:504px" width="14" height="9" viewBox="0 0 14 9"><defs><linearGradient id="dg" x1="0" y1="0" x2="0" y2="1"><stop offset="0" stop-color="#e4e4e4"/><stop offset="1" stop-color="#bcbcbc"/></linearGradient></defs>
<g shape-rendering="crispEdges"><rect x="1" y="0" width="12" height="1" fill="#c8c8c8"/><rect x="0" y="1" width="14" height="3" fill="url(#dg)"/><rect x="0" y="4" width="14" height="4" fill="#2e2e2e"/><rect x="0" y="8" width="14" height="1" fill="#9a9a9a"/><rect x="9" y="5" width="3" height="2" fill="#30d030"/><rect x="10" y="4" width="1" height="4" fill="#30d030"/></g></svg></div>
<div class="clip" style="left:-196px;top:-391px;width:986px;height:708px;overflow:visible"><svg style="left:207px;top:603px" width="14" height="9" viewBox="0 0 14 9"><defs><linearGradient id="dg" x1="0" y1="0" x2="0" y2="1"><stop offset="0" stop-color="#e4e4e4"/><stop offset="1" stop-color="#bcbcbc"/></linearGradient></defs>
<g shape-rendering="crispEdges"><rect x="1" y="0" width="12" height="1" fill="#c8c8c8"/><rect x="0" y="1" width="14" height="3" fill="url(#dg)"/><rect x="0" y="4" width="14" height="4" fill="#2e2e2e"/><rect x="0" y="8" width="14" height="1" fill="#9a9a9a"/><rect x="9" y="5" width="3" height="2" fill="#30d030"/><rect x="10" y="4" width="1" height="4" fill="#30d030"/></g></svg></div>
</div>
<div class="b" style="left:773px;top:391px;width:17px;height:271px;background:#f0f0f0;border-left:1px solid #fff"></div>
<div class="b" style="left:774px;top:408px;width:15px;height:119px;background:#cdcdcd"></div>
<svg style="left:0;top:0" width="986" height="708"><path d="M781.5 397 L778.0 400.5 L778.0 403.5 L781.5 400 L785.0 403.5 L785.0 400.5 Z" fill="#606060"/></svg>
<svg style="left:0;top:0" width="986" height="708"><path d="M781.5 657.5 L778.0 654.0 L778.0 651.0 L781.5 654.5 L785.0 651.0 L785.0 654.0 Z" fill="#606060"/></svg>
<div class="b" style="left:196px;top:662px;width:594px;height:20px;background:#f0f0f0;border-top:1px solid #fff;border-left:1px solid #fff;border-right:1px solid #a0a0a0;border-bottom:1px solid #a0a0a0"></div>
<div class="b" style="left:201px;top:665px;width:12px;height:14px;background:#000;border:1px solid #fff"></div>
<div class="t " style="left:216px;top:665px;">Nicht zugeordnet</div>
<div class="b" style="left:314px;top:665px;width:12px;height:14px;background:#000080;border:1px solid #fff"></div>
<div class="t " style="left:329px;top:665px;">Primäre Partition</div>
<div class="b" style="left:795px;top:83px;width:190px;height:601px;background:#fff;border-top:1px solid #a0a0a0;border-left:1px solid #a0a0a0;border-bottom:1px solid #fff;border-right:1px solid #fff"></div>
<div class="b" style="left:796px;top:84px;width:188px;height:599px;border-top:1px solid #696969;border-left:1px solid #696969;border-bottom:1px solid #e3e3e3;border-right:1px solid #e3e3e3"></div>
<div class="b" style="left:797px;top:85px;width:187px;height:20px;background:#f0f0f0;border-top:1px solid #fff;border-left:1px solid #fff"></div>
<div class="b" style="left:797px;top:105px;width:187px;height:1px;background:#a0a0a0"></div>
<div class="t bold" style="left:802px;top:89px;">Aktionen</div>
<div class="b" style="left:797px;top:107px;width:187px;height:25px;background:linear-gradient(#c5d9ef,#a5bfdd)"></div>
<div class="t " style="left:804px;top:113px;">Datenträgerverwaltung</div>
<svg style="left:966px;top:117px" width="11" height="6"><path d="M0 6 L5.5 0 L11 6Z" fill="#000"/></svg>
<div class="t " style="left:828px;top:137px;">Weitere Aktionen</div>
<svg style="left:970px;top:139px" width="6" height="10"><path d="M0 0 L5 5 L0 10Z" fill="#000"/></svg>
<div class="b" style="left:191px;top:683px;width:794px;height:1px;background:#fff"></div>
<div class="b" style="left:1px;top:684px;width:984px;height:1px;background:#dadada"></div>
<div class="b" style="left:1px;top:706px;width:984px;height:1px;background:#fff"></div>
<div class="b" style="left:764px;top:686px;width:1px;height:20px;background:#d0d0d0"></div>
<div class="b" style="left:897px;top:686px;width:1px;height:20px;background:#d0d0d0"></div>
<div class="b" style="left:982px;top:686px;width:1px;height:20px;background:#d0d0d0"></div>
<div class="b" style="left:0px;top:0px;width:986px;height:708px;border-style:solid;border-width:1px;border-color:#062f5a #063463 #0f4464 #124e6a"></div>
</body></html>
